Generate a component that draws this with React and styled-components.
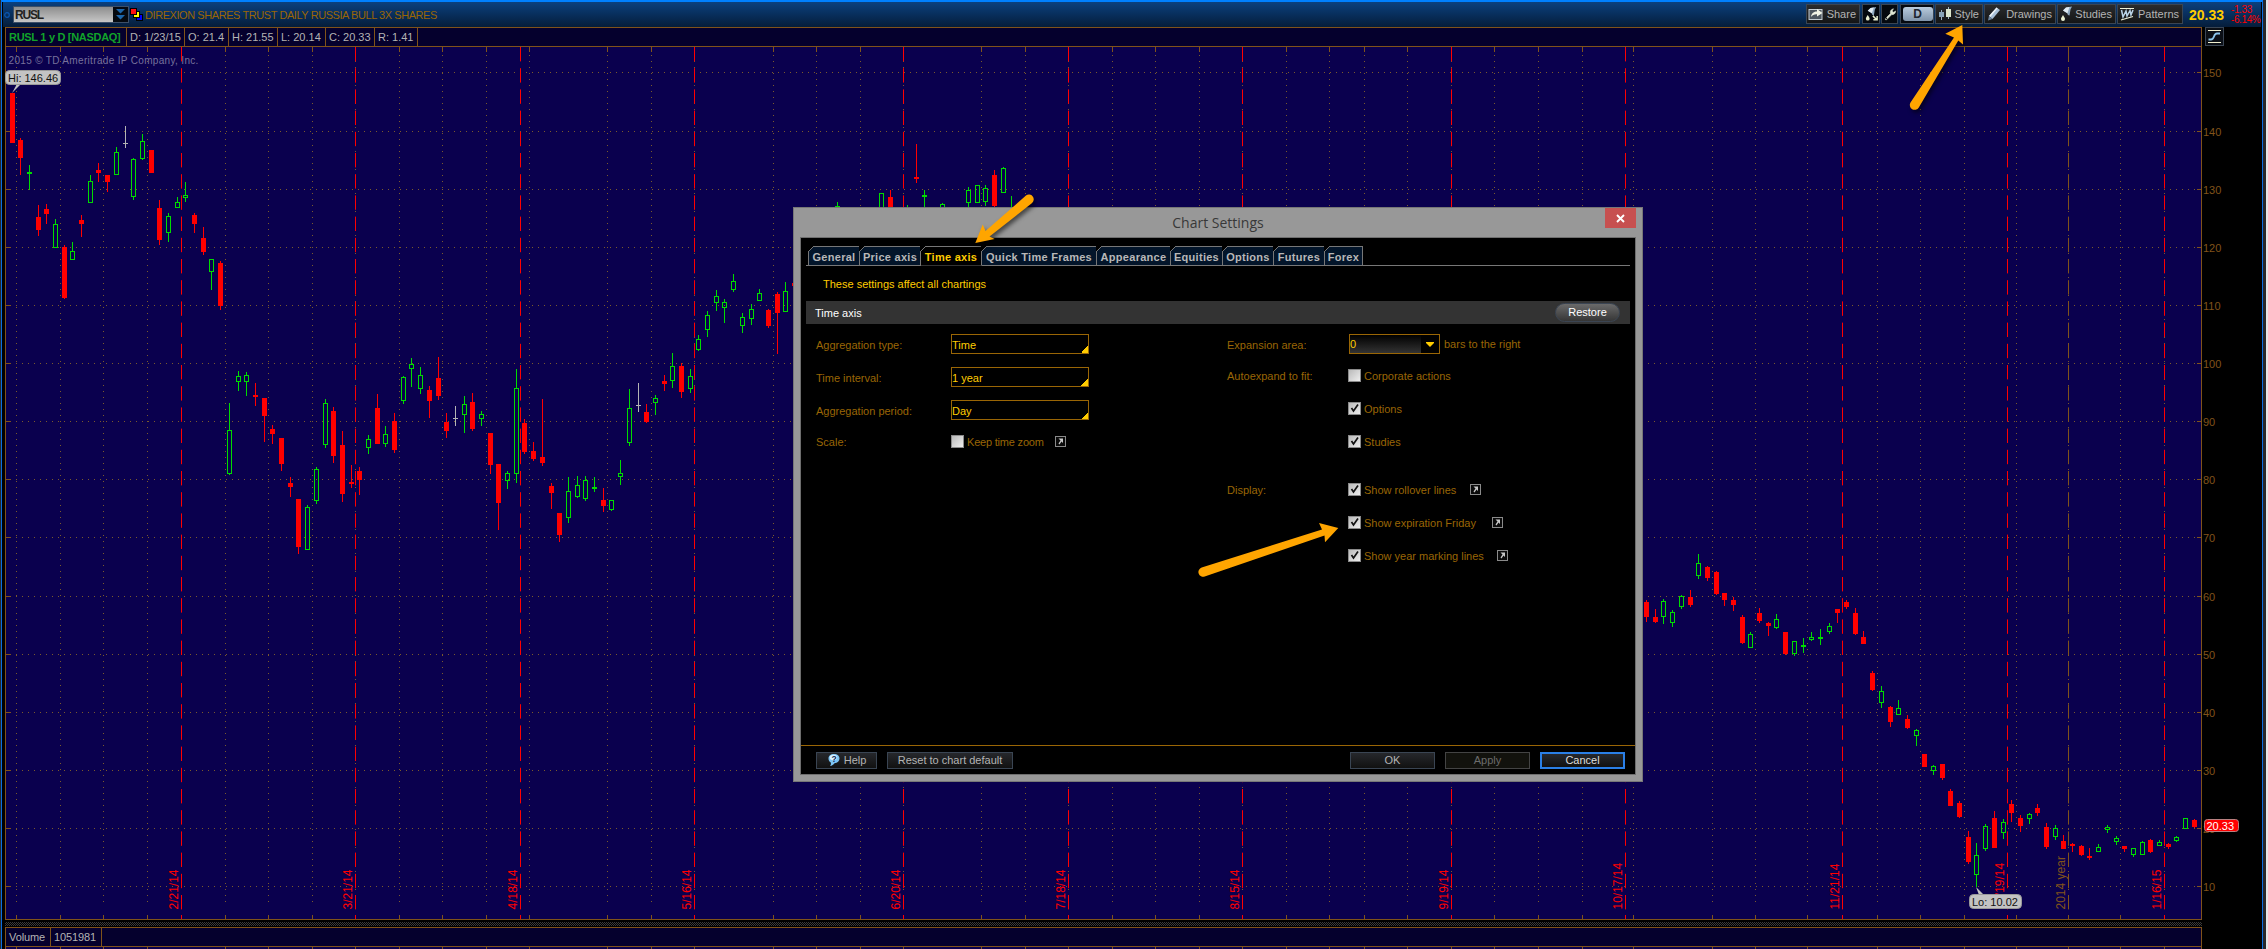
import React, { useState } from "react";
import styled, { createGlobalStyle, css } from "styled-components";

const GlobalStyle = createGlobalStyle`
  * {
    box-sizing: border-box;
  }

  body {
    margin: 0;
    background: #000;
    font-family: "Liberation Sans", Arial, sans-serif;
    font-size: 11px;
    overflow: hidden;
  }
`;

const Screen = styled.div`
  position: relative;
  width: 2268px;
  height: 949px;
  padding: 0 3px 0 1px;
  background: #26282c;
  border-right: 2px solid #e6e6e8;
  overflow: hidden;
  white-space: nowrap;
`;

const Window = styled.div`
  display: flex;
  flex-direction: column;
  height: 949px;
  background: #000;
  border: 1px solid #0a6ee0;
  border-top: 2px solid #0080ff;
  border-bottom: none;
`;

const Header = styled.div`
  display: flex;
  align-items: center;
  height: 25px;
  flex-shrink: 0;
  margin: 0 1px;
  padding-left: 1px;
  background: linear-gradient(#0b407e, #051d3a);
`;

const SymbolBox = styled.div`
  display: flex;
  width: 116px;
  height: 17px;
  margin: 0 1px 0 3px;
  border: 1px solid #3c4f68;
`;

const SymbolInput = styled.div`
  width: 99px;
  padding-left: 1px;
  background: linear-gradient(#8e8e8e, #c6c6c6);
  color: #222;
  font-weight: bold;
  font-size: 12px;
  line-height: 16px;
  letter-spacing: -1.2px;
`;

const SymbolDrop = styled.div`
  flex: 1;
  display: flex;
  background: #05090f;
`;

const CompanyName = styled.div`
  flex: 1;
  margin-left: 2px;
  color: #9a6605;
  letter-spacing: -0.43px;
  line-height: 25px;
  padding-top: 1px;
`;

const ToolButton = styled.div`
  display: flex;
  align-items: center;
  justify-content: space-between;
  width: ${({ w }) => w}px;
  height: 20px;
  margin-right: ${({ gap }) => gap || 1}px;
  margin-bottom: 1px;
  padding: 0 ${({ bare }) => (bare ? 0 : 3)}px 0 1px;
  background: ${({ bare }) => (bare ? "#05090f" : "linear-gradient(#2a2b2d, #141516)")};
  border: 1px solid #3a4553;
  color: #b4b4b4;
`;

const PeriodPill = styled.div`
  width: 30px;
  height: 14px;
  margin: 0 auto;
  border-radius: 3px;
  background: linear-gradient(#b9cbdd, #8094aa);
  color: #1d2530;
  font-weight: bold;
  font-size: 12px;
  line-height: 14px;
  text-align: center;
`;

const LastPrice = styled.div`
  width: 42px;
  margin-left: 5px;
  color: #ffcc00;
  font-size: 14px;
  font-weight: bold;
`;

const Change = styled.div`
  width: 30px;
  color: #ff0000;
  font-size: 10px;
  line-height: 10px;
  letter-spacing: -0.4px;
`;

const StudyBar = styled.div`
  display: flex;
  flex-shrink: 0;
  height: 20px;
  margin-left: 3px;
`;

const StudyCells = styled.div`
  display: flex;
  width: 2197px;
  margin-right: 3px;
  background: #05002d;
  border: 1px solid #80531a;
`;

const StudyCell = styled.div`
  width: ${({ w }) => w}px;
  padding-left: 3px;
  border-right: 1px solid #80531a;
  color: ${({ symbol }) => (symbol ? "#11a32a" : "#b4b4b4")};
  font-weight: ${({ symbol }) => (symbol ? "bold" : "normal")};
  letter-spacing: ${({ spacing }) => spacing || 0}px;
  line-height: 18px;
`;

const ScaleToggle = styled.div`
  width: 19px;
  height: 19px;
  background: #0b0f16;
  border: 1px solid #3a4553;
`;

const ChartSvg = styled.svg`
  display: block;
  flex-shrink: 0;
  margin-left: 3px;
  font-family: "Liberation Sans", Arial, sans-serif;
`;

const Splitter = styled.div`
  height: 7px;
  flex-shrink: 0;
  width: 2197px;
  margin-left: 3px;
  background: repeating-conic-gradient(#3a3a3a 0 25%, #000 0 50%) 0 2px / 2px 2px;
  border-top: 2px solid #000;
  border-bottom: 1px solid #000;
`;

/* chart settings dialog */

const Dialog = styled.div`
  position: absolute;
  left: 793px;
  top: 207px;
  width: 850px;
  height: 575px;
  display: flex;
  flex-direction: column;
  padding: 0 6px 6px;
  background: #989898;
  border: 1px solid #777;
`;

const TitleBar = styled.div`
  display: flex;
  justify-content: center;
  height: 29px;
  flex-shrink: 0;
  color: #383838;
  font-family: "Open Sans", sans-serif;
  font-size: 14px;
  line-height: 29px;
`;

const CloseButton = styled.div`
  position: absolute;
  right: 6px;
  top: 0;
  width: 31px;
  height: 20px;
  display: flex;
  align-items: center;
  justify-content: center;
  background: #c75050;
`;

const DialogBody = styled.div`
  flex: 1;
  display: flex;
  flex-direction: column;
  background: #000;
  border: 1px solid #6e6e6e;
  color: #9a6605;
`;

const Tabs = styled.div`
  display: flex;
  height: 20px;
  margin: 8px 5px 0;
  padding-left: 2px;
  border-bottom: 1px solid #777;
`;

const Tab = styled.div`
  position: relative;
  width: ${({ w }) => w}px;
  height: ${({ active }) => (active ? 20 : 19)}px;
  background: ${({ active }) => (active ? "#000" : "#03152a")};
  border-top: 1px solid #777;
  border-right: 1px solid #777;
  color: ${({ active }) => (active ? "#ffcc00" : "#b8b8b8")};
  font-weight: bold;
  line-height: 21px;
  text-align: center;
  letter-spacing: 0.28px;
  ${({ active }) =>
    active &&
    css`
      border-bottom: 1px solid #333;
    `}
  ${({ first }) =>
    first &&
    css`
      border-left: 1px solid #777;
    `}

  &::before {
    content: "";
    position: absolute;
    left: -1px;
    top: -1px;
    width: 6px;
    height: 6px;
    background: linear-gradient(135deg, #000 46%, #777 46%, #777 58%, transparent 58%);
  }
`;

const Note = styled.div`
  margin: 10px 0 0 22px;
  height: 25px;
  line-height: 17px;
  color: #ffcc00;
`;

const SectionBar = styled.div`
  display: flex;
  align-items: center;
  justify-content: space-between;
  height: 23px;
  margin: 0 5px;
  padding: 0 10px 0 9px;
  background: #333;
  color: #fff;
`;

const RestoreButton = styled.div`
  width: 65px;
  height: 19px;
  margin-bottom: 1px;
  border: 1px solid #3b4553;
  border-radius: 10px;
  background: linear-gradient(#6a6a6a, #363636);
  line-height: 17px;
  text-align: center;
`;

const Columns = styled.div`
  flex: 1;
  display: flex;
  padding: 4px 0 0 15px;
`;

const Column = styled.div`
  width: ${({ w }) => w}px;
`;

const Field = styled.div`
  display: flex;
  align-items: center;
  height: 32px;
  margin-bottom: 1px;
`;

const FieldLabel = styled.div`
  width: ${({ w }) => w}px;
  padding-top: 1px;
`;

const SelectBox = styled.div`
  width: 138px;
  height: 20px;
  border: 1px solid #9a6605;
  color: #ffcc00;
  line-height: 20px;
  background: linear-gradient(135deg, transparent 50%, #ffcc00 50%) right 0 bottom 0 / 7px 7px no-repeat;
`;

const ComboBox = styled.div`
  display: flex;
  width: 91px;
  height: 20px;
  margin: 0 4px 0 1px;
  border: 1px solid #9a6605;
`;

const ComboInput = styled.div`
  width: 71px;
  background: linear-gradient(#000, #333);
  color: #ffcc00;
  line-height: 18px;
`;

const ComboArrow = styled.svg`
  margin: 7px 0 0 5px;
`;

const CheckLabel = styled.span`
  margin: 0 ${({ gap }) => gap || 0}px 0 3px;
  letter-spacing: ${({ spacing }) => spacing || 0}px;
`;

const OptionField = styled(Field)`
  align-items: flex-end;
  height: ${({ h }) => h || 33}px;
  margin-bottom: 0;
  padding-bottom: 9px;

  & > * {
    height: 13px;
    line-height: 12px;
  }

  & > ${CheckLabel}, & > ${FieldLabel} {
    padding-top: 1px;
  }
`;

const PopOut = styled.svg`
  && {
    height: 11px;
    margin-bottom: 1px;
  }
`;

const Footer = styled.div`
  display: flex;
  height: 29px;
  padding: 6px 10px 0 15px;
  border-top: 1px solid #9a6605;
`;

const FooterButton = styled.div`
  display: flex;
  justify-content: center;
  align-items: center;
  width: ${({ w }) => w}px;
  height: 17px;
  padding-bottom: 1px;
  margin-right: ${({ gap }) => gap ?? 10}px;
  background: ${({ disabled }) => (disabled ? "#12120d" : "linear-gradient(#26282c, #111)")};
  border: ${({ focused }) => (focused ? "2px solid #2a7fe6" : "1px solid #3a4553")};
  border-color: ${({ disabled }) => disabled && "#444"};
  color: ${({ disabled, focused }) => (disabled ? "#6b6b6b" : focused ? "#ddd" : "#b4b4b4")};
`;

const Arrows = styled.svg`
  position: absolute;
  left: 0;
  top: 0;
  filter: drop-shadow(2px 3px 2px rgba(0, 0, 0, 0.55));
`;

const PRICE_LINES = [
  [150, 72], [140, 131], [130, 189], [120, 247], [110, 305], [100, 363], [90, 421], [80, 479],
  [70, 537], [60, 596], [50, 654], [40, 712], [30, 770], [20, 828], [10, 886],
];

const WEEKS = [
  16, 60, 103, 147, 225, 268, 312, 355, 399, 442, 486, 529, 607, 651, 694, 773, 816, 860, 903, 981,
  1025, 1068, 1112, 1155, 1199, 1242, 1286, 1329, 1364, 1407, 1451, 1494, 1538, 1582, 1633, 1712,
  1755, 1807, 1877, 1920, 1964, 2016, 2068, 2120, 2164,
];

const EXPIRATIONS = [
  [181, "2/21/14"], [355, "3/21/14"], [520, "4/18/14"], [694, "5/16/14"], [903, "6/20/14"],
  [1068, "7/18/14"], [1242, "8/15/14"], [1451, "9/19/14"], [1625, "10/17/14"], [1842, "11/21/14"],
  [2007, "12/19/14"], [2164, "1/16/15"],
];

// [x, high, body top, body bottom, low, colour]
const CANDLES = [
  [12, 93, 93, 143, 143, "r"], [20, 138, 140, 158, 175, "r"], [29, 165, 172, 174, 190, "g"],
  [38, 205, 217, 230, 236, "r"], [46, 204, 209, 214, 224, "r"], [55, 219, 224, 248, 248, "g"],
  [64, 245, 247, 298, 299, "r"], [72, 242, 251, 260, 260, "g"], [81, 215, 220, 224, 237, "r"],
  [90, 175, 181, 203, 203, "g"], [98, 163, 170, 173, 182, "r"], [107, 175, 175, 182, 192, "r"],
  [116, 147, 152, 175, 175, "g"], [125, 126, 143, 144, 148, "w"], [133, 158, 159, 197, 200, "g"],
  [142, 134, 141, 159, 160, "g"], [151, 150, 150, 173, 173, "r"], [159, 200, 208, 240, 245, "r"],
  [168, 213, 216, 233, 242, "g"], [177, 197, 202, 208, 208, "g"], [185, 182, 195, 198, 202, "g"],
  [194, 213, 215, 224, 233, "r"], [203, 227, 238, 252, 255, "r"], [211, 259, 259, 272, 290, "g"],
  [220, 261, 263, 306, 310, "r"], [229, 403, 430, 474, 475, "g"], [238, 371, 376, 382, 391, "g"],
  [246, 372, 375, 382, 396, "g"], [255, 383, 395, 397, 406, "r"], [264, 398, 398, 416, 442, "r"],
  [272, 425, 429, 434, 444, "r"], [281, 438, 438, 464, 471, "r"], [290, 477, 483, 487, 497, "r"],
  [298, 499, 499, 547, 554, "r"], [307, 505, 507, 550, 550, "g"], [316, 467, 469, 501, 504, "g"],
  [325, 399, 403, 445, 448, "g"], [333, 407, 411, 456, 463, "r"], [342, 431, 445, 494, 502, "r"],
  [351, 465, 482, 484, 488, "r"], [359, 467, 471, 480, 495, "r"], [368, 435, 439, 448, 454, "g"],
  [377, 394, 408, 444, 444, "r"], [385, 426, 434, 444, 447, "g"], [394, 413, 421, 450, 453, "r"],
  [403, 376, 377, 401, 404, "g"], [411, 358, 364, 369, 387, "g"], [420, 367, 375, 389, 394, "g"],
  [429, 386, 390, 401, 418, "r"], [438, 357, 378, 396, 400, "r"], [446, 413, 422, 431, 438, "r"],
  [455, 406, 418, 419, 426, "w"], [464, 396, 404, 415, 433, "g"], [472, 393, 402, 429, 431, "r"],
  [481, 411, 414, 419, 426, "g"], [490, 433, 433, 465, 474, "r"], [498, 464, 464, 503, 530, "r"],
  [507, 471, 473, 481, 489, "g"], [516, 369, 388, 474, 483, "g"], [524, 419, 423, 452, 454, "r"],
  [533, 442, 451, 459, 461, "r"], [542, 399, 457, 463, 466, "r"], [551, 483, 486, 493, 509, "r"],
  [559, 513, 513, 535, 542, "r"], [568, 477, 491, 518, 523, "g"], [577, 476, 485, 497, 498, "g"],
  [585, 476, 480, 499, 501, "g"], [594, 477, 487, 489, 492, "g"], [603, 488, 500, 506, 512, "r"],
  [611, 500, 500, 510, 511, "g"], [620, 460, 473, 477, 485, "g"], [629, 389, 408, 443, 446, "g"],
  [638, 383, 405, 406, 412, "w"], [646, 404, 412, 422, 423, "r"], [655, 395, 398, 403, 415, "g"],
  [664, 375, 381, 384, 391, "r"], [672, 353, 366, 381, 388, "g"], [681, 363, 366, 392, 398, "r"],
  [690, 369, 376, 389, 393, "g"], [698, 335, 339, 350, 351, "g"], [707, 311, 315, 330, 337, "g"],
  [716, 290, 296, 303, 311, "g"], [724, 299, 302, 308, 323, "g"], [733, 274, 281, 290, 292, "g"],
  [742, 313, 317, 326, 333, "g"], [751, 304, 309, 319, 325, "g"], [759, 289, 293, 301, 301, "g"],
  [768, 309, 310, 326, 328, "r"], [777, 292, 294, 313, 354, "r"], [785, 282, 291, 312, 312, "g"],
  [794, 280, 283, 286, 288, "r"], [837, 202, 206, 208, 212, "g"], [881, 193, 193, 215, 216, "g"],
  [890, 190, 197, 215, 216, "r"], [907, 205, 208, 212, 216, "g"], [916, 144, 177, 179, 183, "r"],
  [924, 190, 195, 197, 209, "g"], [942, 203, 204, 212, 216, "g"], [968, 187, 190, 203, 210, "g"],
  [977, 185, 185, 203, 203, "g"], [985, 185, 188, 202, 206, "g"], [994, 170, 175, 206, 210, "r"],
  [1003, 167, 168, 193, 193, "g"], [1011, 196, 209, 216, 218, "g"], [1646, 600, 602, 617, 622, "r"],
  [1655, 609, 617, 622, 623, "r"], [1663, 599, 601, 617, 624, "g"], [1672, 610, 612, 623, 627, "g"],
  [1681, 595, 596, 607, 609, "g"], [1690, 590, 597, 605, 607, "r"], [1698, 554, 563, 576, 579, "g"],
  [1707, 566, 567, 578, 581, "r"], [1716, 571, 572, 594, 595, "r"], [1724, 593, 593, 600, 606, "r"],
  [1733, 597, 600, 605, 611, "r"], [1742, 615, 617, 643, 644, "r"], [1750, 632, 634, 648, 648, "g"],
  [1759, 608, 613, 621, 623, "r"], [1768, 622, 623, 626, 636, "r"], [1776, 614, 619, 628, 629, "g"],
  [1785, 632, 632, 654, 655, "r"], [1794, 641, 641, 654, 656, "g"], [1803, 638, 645, 647, 653, "g"],
  [1811, 632, 637, 640, 641, "g"], [1820, 629, 637, 639, 645, "g"], [1829, 623, 626, 632, 634, "g"],
  [1837, 609, 609, 613, 623, "r"], [1846, 600, 602, 607, 609, "r"], [1855, 608, 613, 634, 635, "r"],
  [1863, 631, 637, 644, 644, "r"], [1872, 671, 673, 690, 691, "r"], [1881, 686, 691, 703, 708, "g"],
  [1890, 706, 707, 722, 727, "r"], [1898, 700, 708, 715, 715, "g"], [1907, 715, 719, 728, 729, "r"],
  [1916, 729, 730, 736, 746, "g"], [1924, 754, 754, 767, 767, "r"], [1933, 765, 766, 771, 775, "g"],
  [1942, 764, 764, 778, 780, "r"], [1950, 789, 791, 806, 806, "r"], [1959, 801, 803, 817, 818, "r"],
  [1968, 831, 837, 862, 864, "r"], [1976, 843, 855, 875, 887, "g"], [1985, 824, 826, 849, 851, "g"],
  [1994, 811, 818, 848, 848, "r"], [2003, 819, 822, 833, 839, "g"], [2011, 800, 804, 813, 822, "r"],
  [2020, 815, 818, 826, 832, "r"], [2029, 813, 814, 819, 824, "g"], [2037, 804, 808, 813, 816, "r"],
  [2046, 823, 827, 847, 849, "r"], [2055, 825, 828, 837, 840, "g"], [2063, 835, 841, 849, 849, "r"],
  [2072, 843, 844, 846, 852, "r"], [2081, 845, 846, 855, 856, "r"], [2089, 848, 856, 858, 860, "r"],
  [2098, 844, 847, 852, 852, "g"], [2107, 825, 827, 830, 833, "g"], [2116, 836, 838, 842, 845, "g"],
  [2124, 846, 846, 849, 852, "r"], [2133, 848, 848, 855, 857, "g"], [2142, 841, 842, 855, 855, "g"],
  [2150, 839, 840, 852, 853, "r"], [2159, 840, 842, 846, 846, "g"], [2168, 843, 844, 847, 849, "r"],
  [2176, 836, 837, 841, 842, "g"], [2185, 818, 818, 829, 829, "g"], [2194, 819, 820, 827, 828, "r"],
];

const CANDLE_COLORS = { r: "#ff0000", g: "#00dc00", w: "#b4b4b4" };
const GRID = "#7a5a2c";
const AXIS = "#80531a";

const Candle = ({ data: [x, high, top, bottom, low, type] }) => {
  const color = CANDLE_COLORS[type];
  const hollow = type === "g" && bottom - top > 2;
  return (
    <g fill={color}>
      <rect x={x} y={high} width="1" height={top - high} />
      <rect x={x} y={bottom} width="1" height={low - bottom} />
      {hollow ? (
        <rect
          x={x - 1.5}
          y={top + 0.5}
          width="4"
          height={bottom - top - 1}
          fill="none"
          stroke={color}
        />
      ) : (
        <rect x={x - 2} y={top} width="5" height={bottom - top} />
      )}
    </g>
  );
};

const MarkerLine = ({ x, color, label }) => (
  <g>
    <path d={`M${x + 0.5} 47V909.5`} stroke={color} strokeDasharray="14.4 6.8" />
    <path d={`M${x + 0.5} 915V919`} stroke={color} />
    <text transform={`translate(${x - 3} 909.5) rotate(-90)`} fontSize="12" fill={color}>
      {label}
    </text>
  </g>
);

const Chart = () => (
  <ChartSvg width="2257" height="873" viewBox="5 47 2257 873">
    <rect x="5" y="47" width="2197" height="873" fill="#0a004e" />
    <g shapeRendering="crispEdges">
      {PRICE_LINES.map(([price, y]) => (
        <g key={price}>
          <path d={`M16 ${y + 0.5}H2197`} stroke={GRID} strokeDasharray="1 5" />
          <path d={`M6 ${y + 0.5}H11M2197 ${y + 0.5}H2201`} stroke={AXIS} />
        </g>
      ))}
      {WEEKS.map((x) => (
        <g key={x}>
          <path d={`M${x + 0.5} 55V906`} stroke={GRID} strokeDasharray="1 5" />
          <path d={`M${x + 0.5} 47V52M${x + 0.5} 915V919`} stroke={AXIS} />
        </g>
      ))}
      <path d="M5.5 47V920M2201.5 47V920M5 919.5H2202" stroke={AXIS} />
    </g>
    <text x="8.5" y="63.5" fontSize="10" letterSpacing="0.33" fill="#77729c">
      2015 © TD Ameritrade IP Company, Inc.
    </text>
    {EXPIRATIONS.map(([x, label]) => (
      <MarkerLine key={x} x={x} color="#ff0000" label={label} />
    ))}
    <MarkerLine x={2068} color={AXIS} label="2014 year" />
    <g shapeRendering="crispEdges">
      {CANDLES.map((c) => (
        <Candle key={c[0]} data={c} />
      ))}
    </g>
    {PRICE_LINES.map(([price, y]) => (
      <text key={price} x="2203" y={y + 5} fontSize="11" fill={AXIS}>
        {price}
      </text>
    ))}

    <path d="M17 84L12 93L21 84Z" fill="#c3c3c3" />
    <rect x="5.5" y="70.5" width="55" height="14" rx="4" fill="#c3c3c3" stroke="#9a9a9a" />
    <text x="8" y="82" fontSize="11" fill="#111">
      Hi: 146.46
    </text>
    <path d="M1979 895L1976 887L1984 895Z" fill="#c3c3c3" />
    <rect x="1969.5" y="894.5" width="52" height="14" rx="4" fill="#c3c3c3" stroke="#9a9a9a" />
    <text x="1972" y="906" fontSize="11" fill="#111">
      Lo: 10.02
    </text>
    <rect x="2204.5" y="819.5" width="34" height="12" rx="3" fill="#ff0000" stroke="#b98080" />
    <text x="2206.5" y="830" fontSize="11" fill="#fff">
      20.33
    </text>
  </ChartSvg>
);

const ShareIcon = () => (
  <svg width="16" height="14" viewBox="0 0 16 14">
    <rect x="1" y="2.5" width="13" height="10" fill="#4d565f" stroke="#c3ccd3" />
    <path d="M3 10C3.5 6 6 4.5 9 4.5V2L14.5 6L9 9.5V7.2C6.5 7 4.5 8 3 10Z" fill="#f2f4e6" />
  </svg>
);

const FlaskIcon = ({ arrow }) => (
  <svg width="16" height="16" viewBox="0 0 16 16">
    <path d="M4 4.5L7 1.5L13 0.5L11.5 3.5L10.5 9.5L9 9L8 7Z" fill="#8fa9c0" />
    <path d="M4 4.5L7 1.5L10.5 1L8.4 7.2Z" fill="#dfe9f1" />
    <path d="M4 9C5.3 11.2 6 12 6 13A2 2 0 0 1 2 13C2 12 2.7 11.2 4 9Z" fill="#e9efd2" />
    {arrow && <path d="M9.500 10L13 13.500M14 10V14H10" stroke="#e9efd2" strokeWidth="1.6" fill="none" />}
  </svg>
);

const WrenchIcon = () => (
  <svg width="15" height="16" viewBox="0 0 16 16">
    <path
      d="M2.5 13.5L8.5 7.5C7.8 5 9 2.500 12 2L10.5 4.500L12 6L14.500 4.500C14.500 7.500 12 9 10 8.700L4 14.700Q2.500 15 2.500 13.500Z"
      fill="#dfe6d4"
      stroke="#dfe6d4"
      strokeWidth="0.6"
    />
    <circle cx="3.8" cy="13" r="0.9" fill="#222" />
  </svg>
);

const CandleIcon = () => (
  <svg width="16" height="16" viewBox="0 0 16 16">
    <path d="M4.500 4V14M11.500 1V13" stroke="#9fb4c4" />
    <rect x="2" y="6" width="5" height="5" fill="#8aa4b8" />
    <rect x="9" y="3" width="5" height="8" fill="#dbe6cc" />
  </svg>
);

const PencilIcon = () => (
  <svg width="16" height="16" viewBox="0 0 16 16">
    <path d="M3 10L10.5 1.5L14 4L6.5 13Z" fill="#a9c0d8" />
    <path d="M3 10L10.5 1.5L11.7 2.3L4.3 11Z" fill="#eef3f7" />
    <path d="M3 10L6.5 13L2 14.5Z" fill="#6e86a0" />
  </svg>
);

const PatternIcon = () => (
  <svg width="16" height="16" viewBox="0 0 16 16">
    <path d="M1 2.5H15M2 14L14 10.5" stroke="#eef0d8" strokeWidth="1.2" />
    <path d="M2.5 4L4 11L7 5L8 10L11 4.5L12 9L14 4" stroke="#b9d2e6" strokeWidth="1.5" fill="none" />
  </svg>
);

const TOOLS = [
  { name: "Share", w: 54, gap: 2, icon: <ShareIcon /> },
  { name: "flask", w: 18, bare: true, icon: <FlaskIcon arrow /> },
  { name: "wrench", w: 17, gap: 2, bare: true, icon: <WrenchIcon /> },
  { name: "D", w: 34, pill: true },
  { name: "Style", w: 48, icon: <CandleIcon /> },
  { name: "Drawings", w: 72, icon: <PencilIcon /> },
  { name: "Studies", w: 59, icon: <FlaskIcon /> },
  { name: "Patterns", w: 66, icon: <PatternIcon /> },
];

const CheckBox = ({ checked, onClick }) => (
  <svg width="13" height="13" viewBox="0 0 13 13" onClick={onClick}>
    <defs>
      <linearGradient id="checkFill" x1="0" y1="0" x2="1" y2="1">
        <stop offset="0" stopColor="#b8b8b8" />
        <stop offset="1" stopColor="#f0f0f0" />
      </linearGradient>
    </defs>
    <rect x="0.5" y="0.5" width="12" height="12" fill="url(#checkFill)" stroke="#8a8a8a" />
    {checked && <path d="M3.5 6L5.500 9L10 2.5" fill="none" stroke="#111" strokeWidth="1.7" />}
  </svg>
);

const PopOutIcon = () => (
  <PopOut width="11" height="11" viewBox="0 0 11 11">
    <rect x="0.5" y="0.5" width="10" height="10" fill="#0a0a0a" stroke="#8a8a8a" />
    <path d="M3.5 2.5H8V7L6.5 5.5L4.5 8.5L3.5 7.5L5.5 4.5Z" fill="#c8c8c8" />
  </PopOut>
);

const HelpIcon = () => (
  <svg width="14" height="14" viewBox="0 0 14 14">
    <path d="M7 1C10.5 1 12.5 3 12.5 5.5C12.5 8 10.5 10 7.5 10.2C6.5 11.5 5 12.8 3 13C4 12 4 11 3.8 9.5C2.2 8.6 1.5 7 1.5 5.5C1.5 3 3.5 1 7 1Z" fill="#7cc4f4" />
    <ellipse cx="6.5" cy="4.5" rx="3.8" ry="2.8" fill="#d8f0ff" />
    <text x="4.5" y="8.5" fontSize="8.5" fontWeight="bold" fill="#0a2a55">?</text>
  </svg>
);

const TABS = [
  ["General", 52], ["Price axis", 61], ["Time axis", 61], ["Quick Time Frames", 115],
  ["Appearance", 74], ["Equities", 52], ["Options", 51], ["Futures", 51], ["Forex", 38],
];

const SELECTS = [
  ["Aggregation type:", "Time"],
  ["Time interval:", "1 year"],
  ["Aggregation period:", "Day"],
];

const OPTIONS = [
  { id: "corporate", label: "Corporate actions", group: "Autoexpand to fit:", h: 30 },
  { id: "options", label: "Options" },
  { id: "studies", label: "Studies" },
  { id: "rollover", label: "Show rollover lines", group: "Display:", h: 48, gap: 14 },
  { id: "friday", label: "Show expiration Friday", gap: 16 },
  { id: "year", label: "Show year marking lines", gap: 13 },
];

const ChartSettings = () => {
  const [tab, setTab] = useState("Time axis");
  const [checked, setChecked] = useState({
    options: true,
    studies: true,
    rollover: true,
    friday: true,
    year: true,
  });

  const toggle = (id) => setChecked({ ...checked, [id]: !checked[id] });

  return (
    <Dialog>
      <TitleBar>Chart Settings</TitleBar>
      <CloseButton>
        <svg width="9" height="9" viewBox="0 0 9 9">
          <path d="M1 1L8 8M8 1L1 8" stroke="#fff" strokeWidth="1.9" />
        </svg>
      </CloseButton>
      <DialogBody>
        <Tabs>
          {TABS.map(([name, w], i) => (
            <Tab key={name} w={w} first={i === 0} active={tab === name} onClick={() => setTab(name)}>
              {name}
            </Tab>
          ))}
        </Tabs>
        <Note>These settings affect all chartings</Note>
        <SectionBar>
          Time axis
          <RestoreButton>Restore</RestoreButton>
        </SectionBar>
        <Columns>
          <Column w={411}>
            {SELECTS.map(([label, value]) => (
              <Field key={label}>
                <FieldLabel w={135}>{label}</FieldLabel>
                <SelectBox>{value}</SelectBox>
              </Field>
            ))}
            <OptionField h={30}>
              <FieldLabel w={135}>Scale:</FieldLabel>
              <CheckBox checked={checked.zoom} onClick={() => toggle("zoom")} />
              <CheckLabel gap={11} spacing={-0.2}>
                Keep time zoom
              </CheckLabel>
              <PopOutIcon />
            </OptionField>
          </Column>
          <Column w={400}>
            <Field>
              <FieldLabel w={121}>Expansion area:</FieldLabel>
              <ComboBox>
                <ComboInput>0</ComboInput>
                <ComboArrow width="8" height="5" viewBox="0 0 8 5">
                  <path d="M0 0H8V1L4 5L0 1Z" fill="#ffcc00" />
                </ComboArrow>
              </ComboBox>
              bars to the right
            </Field>
            {OPTIONS.map((o) => (
              <OptionField key={o.id} h={o.h}>
                <FieldLabel w={121}>{o.group}</FieldLabel>
                <CheckBox checked={checked[o.id]} onClick={() => toggle(o.id)} />
                <CheckLabel gap={o.gap}>{o.label}</CheckLabel>
                {o.gap && <PopOutIcon />}
              </OptionField>
            ))}
          </Column>
        </Columns>
        <Footer>
          <FooterButton w={61}>
            <HelpIcon />
            &nbsp;Help
          </FooterButton>
          <FooterButton w={126} gap={337}>
            Reset to chart default
          </FooterButton>
          <FooterButton w={85}>OK</FooterButton>
          <FooterButton w={85} disabled>
            Apply
          </FooterButton>
          <FooterButton w={85} gap={0} focused>
            Cancel
          </FooterButton>
        </Footer>
      </DialogBody>
    </Dialog>
  );
};

const App = () => (
  <>
    <GlobalStyle />
    <Screen>
      <Window>
        <Header>
          <svg width="6" height="6" viewBox="0 0 6 6">
            <circle cx="3" cy="3" r="2.3" fill="none" stroke="#0a56b0" strokeWidth="1.2" />
          </svg>
          <SymbolBox>
            <SymbolInput>RUSL</SymbolInput>
            <SymbolDrop>
              <svg width="15" height="15" viewBox="0 0 15 15">
                <path d="M3 2H12L7.5 6.5ZM3 8H12L7.5 12.5Z" fill="#1c66ab" />
              </svg>
            </SymbolDrop>
          </SymbolBox>
          <svg width="13" height="13" viewBox="0 0 13 13">
            <rect x="6.5" y="6.5" width="6" height="6" fill="#0000ff" stroke="#000" />
            <rect x="3.5" y="3.5" width="6" height="6" fill="#ffff00" stroke="#000" />
            <rect x="0.5" y="0.5" width="6" height="6" fill="#ff1010" stroke="#000" />
          </svg>
          <CompanyName>DIREXION SHARES TRUST DAILY RUSSIA BULL 3X SHARES</CompanyName>
          {TOOLS.map(({ name, icon, pill, bare, w, gap }) => (
            <ToolButton key={name} w={w} gap={gap} bare={bare || pill}>
              {icon}
              {pill ? <PeriodPill>{name}</PeriodPill> : !bare && name}
            </ToolButton>
          ))}
          <LastPrice>20.33</LastPrice>
          <Change>
            -1.33
            <br />
            -6.14%
          </Change>
        </Header>
        <StudyBar>
          <StudyCells>
            <StudyCell w={121} symbol spacing={-0.3}>
              RUSL 1 y D [NASDAQ]
            </StudyCell>
            <StudyCell w={58}>D: 1/23/15</StudyCell>
            <StudyCell w={44}>O: 21.4</StudyCell>
            <StudyCell w={49}>H: 21.55</StudyCell>
            <StudyCell w={48}>L: 20.14</StudyCell>
            <StudyCell w={49}>C: 20.33</StudyCell>
            <StudyCell w={43}>R: 1.41</StudyCell>
          </StudyCells>
          <ScaleToggle>
            <svg width="17" height="17" viewBox="0 0 17 17">
              <path d="M2 2.5H15M2 14.5H15" stroke="#f0efcf" />
              <path d="M2.5 11.5H5C9 11.5 7 5.5 11 5.5H14" stroke="#8cc4ea" strokeWidth="1.8" fill="none" />
            </svg>
          </ScaleToggle>
        </StudyBar>
        <Chart />
        <Splitter />
        <StudyBar>
          <StudyCells>
            <StudyCell w={45} spacing={-0.1}>
              Volume
            </StudyCell>
            <StudyCell w={51} spacing={-0.1}>
              1051981
            </StudyCell>
          </StudyCells>
        </StudyBar>
        <ChartSvg width="2257" height="2" viewBox="5 947 2257 2" shapeRendering="crispEdges">
          <rect x="5" y="947" width="2197" height="2" fill="#0a004e" />
          {WEEKS.map((x) => (
            <rect key={x} x={x} y="947" width="1" height="2" fill={AXIS} />
          ))}
          <path d="M5.5 947V949M2201.5 947V949" stroke={AXIS} />
        </ChartSvg>
      </Window>
      <ChartSettings />
      <Arrows width="2268" height="600" viewBox="0 0 2268 600" fill="#ffa500">
        <path d="M1962.3 25L1945.3 33.8L1954 37.5L1910.5 102.5A4.7 4.7 0 0 0 1918.8 107.5L1958.3 40.5L1963 44.5Z" />
        <path d="M975.3 243L982.7 224.5L985.5 231L1026 195.5A4.7 4.7 0 0 1 1031.8 203.2L989.5 236.5L994.7 239Z" />
        <path d="M1338.3 528L1319 523L1322 529.5L1201.7 567.5A4.7 4.7 0 0 0 1204.7 576.6L1324.5 535.5L1325 542.3Z" />
      </Arrows>
    </Screen>
  </>
);

export default App;
